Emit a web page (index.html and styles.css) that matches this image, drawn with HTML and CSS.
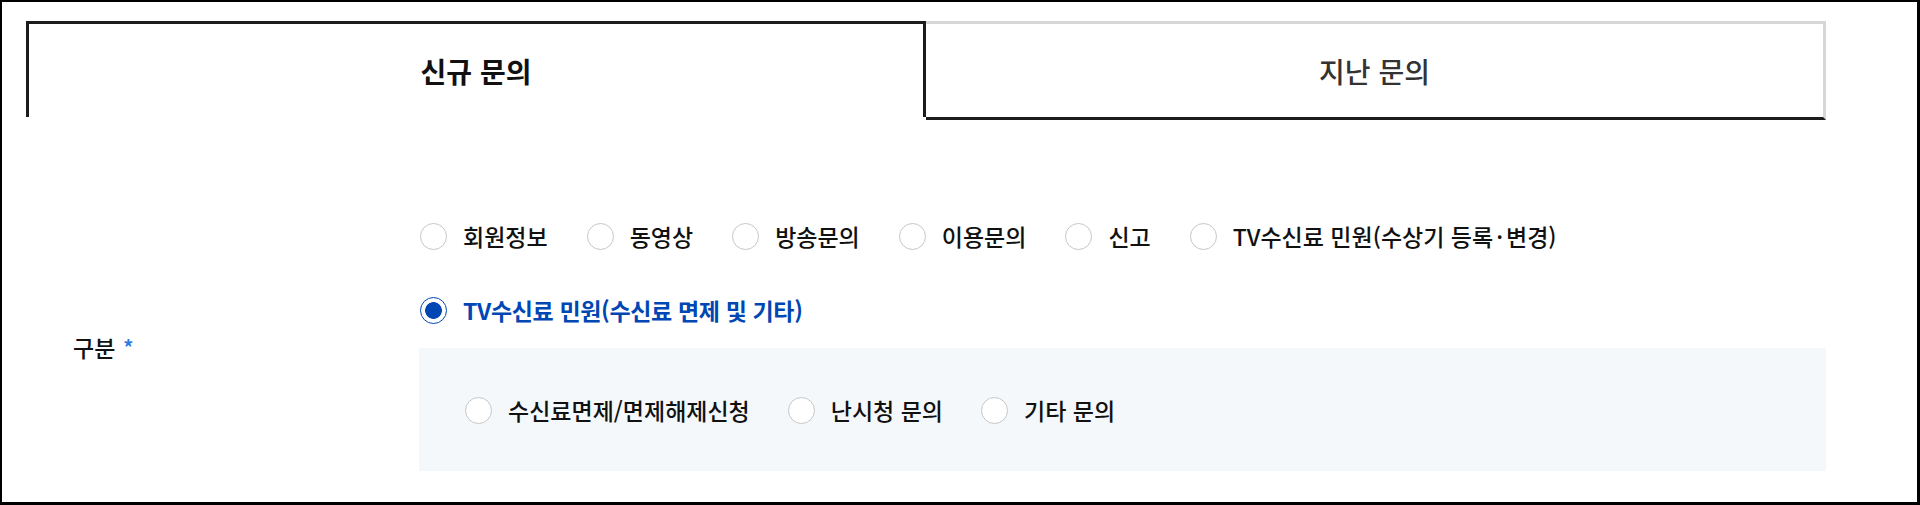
FILE: index.html
```html
<!DOCTYPE html>
<html lang="ko">
<head>
<meta charset="utf-8">
<title>문의하기</title>
<link rel="stylesheet" href="styles.css">
</head>
<body>
<div class="frame">
  <div class="content">
    <div class="tabs">
      <div class="tab tab-active">신규 문의</div>
      <div class="tab tab-inactive">지난 문의</div>
    </div>
    <div class="form-row">
      <div class="form-label">구분<span class="req">*</span></div>
      <div class="form-field">
        <div class="radio-list">
          <label class="radio"><input type="radio" name="cat"><span>회원정보</span></label>
          <label class="radio"><input type="radio" name="cat"><span>동영상</span></label>
          <label class="radio"><input type="radio" name="cat"><span>방송문의</span></label>
          <label class="radio"><input type="radio" name="cat"><span>이용문의</span></label>
          <label class="radio"><input type="radio" name="cat"><span>신고</span></label>
          <label class="radio"><input type="radio" name="cat"><span>TV수신료 민원(수상기 등록<span class="dot">·</span>변경)</span></label>
          <label class="radio radio-selected"><input type="radio" name="cat" checked><span>TV수신료 민원(수신료 면제 및 기타)</span></label>
        </div>
        <div class="sub-box">
          <div class="radio-list">
            <label class="radio"><input type="radio" name="sub"><span>수신료면제/면제해제신청</span></label>
            <label class="radio"><input type="radio" name="sub"><span>난시청 문의</span></label>
            <label class="radio"><input type="radio" name="sub"><span>기타 문의</span></label>
          </div>
        </div>
      </div>
    </div>
  </div>
</div>
</body>
</html>
```
FILE: styles.css
```css
html, body {
  margin: 0;
  padding: 0;
  background: #fff;
}
body {
  font-family: "Noto Sans CJK KR", "Noto Sans", sans-serif;
  color: #111;
}
.frame {
  box-sizing: border-box;
  width: 1920px;
  height: 505px;
  border-style: solid;
  border-color: #000;
  border-width: 2px 3px 3px 2px;
  padding: 19px 0 0 24px;
}
.content {
  width: 1800px;
}
.tabs {
  display: flex;
  align-items: flex-start;
}
.tab {
  box-sizing: border-box;
  width: 900px;
  display: flex;
  align-items: center;
  justify-content: center;
  font-size: 28px;
}
.tab-active {
  height: 96px;
  border: 3px solid #1c1c1c;
  border-bottom: 0;
  font-weight: 700;
  color: #111;
}
.tab-inactive {
  height: 99px;
  border-top: 3px solid #d6d6d6;
  border-right: 3px solid #d6d6d6;
  border-bottom: 3px solid #1c1c1c;
  font-weight: 500;
  color: #333;
}
.form-row {
  display: flex;
  align-items: center;
  margin-top: 103px;
}
.form-label {
  width: 346px;
  padding-left: 47px;
  font-size: 23px;
  font-weight: 500;
  display: flex;
  align-items: flex-start;
}
.req {
  color: #2b7be4;
  font-size: 20px;
  font-weight: 700;
  margin-left: 8px;
  line-height: 1;
  margin-top: 7px;
}
.form-field {
  flex: 1;
}
.radio-list {
  display: flex;
  flex-wrap: wrap;
  column-gap: 38px;
  row-gap: 48px;
}
.radio {
  display: flex;
  align-items: center;
  height: 26px;
  font-size: 23px;
  font-weight: 500;
  color: #111;
  cursor: pointer;
}
.dot {
  margin: 0 3px;
}
.radio input {
  appearance: none;
  -webkit-appearance: none;
  box-sizing: border-box;
  width: 27px;
  height: 27px;
  margin: 0 16px 0 1px;
  border: 1px solid #c6c6c6;
  border-radius: 50%;
  background: #fff;
  flex: none;
}
.radio input:checked {
  border-color: #0047b4;
  background: radial-gradient(circle, #0047b4 0 8px, #fff 8.7px);
}
.radio-selected {
  color: #0047b4;
  font-weight: 700;
  letter-spacing: -0.35px;
}
.sub-box {
  margin-top: 25px;
  background: #f4f8fb;
  padding: 49px 46px 48px;
}
.sub-box .radio input {
  margin-left: 0;
}
```
